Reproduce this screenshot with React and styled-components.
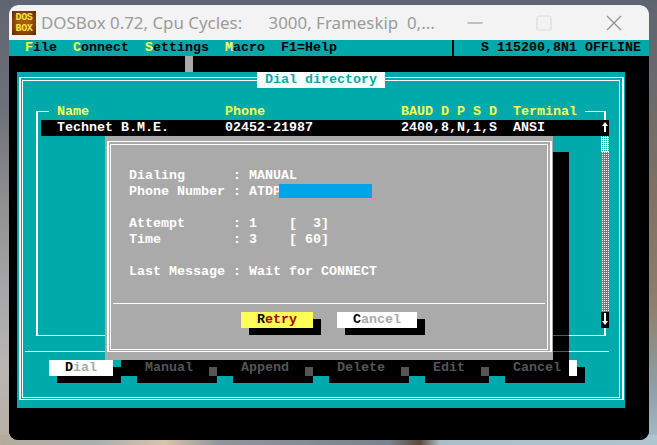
import React from "react"
import styled, { createGlobalStyle } from "styled-components"

const TEAL = "#00aaaa"
const GRAY = "#aaaaaa"
const DIM = "#555555"
const YELLOW = "#ffff55"

const GlobalStyle = createGlobalStyle`
  html, body {
    margin: 0;
    padding: 0;
    background: #5f6673;
  }
`

const Desktop = styled.div`
  width: 657px;
  height: 445px;
  box-sizing: border-box;
  padding: 5px 8px 5px 9px;
  overflow: hidden;
  background:
    linear-gradient(90deg, #b5aa9c 0, #aab0ae 100px, #d9c3ab 165px, #8f959b 220px, #78838f 390px, #5d4a38 420px, #a8bfca 440px, #aec4ce 657px) 0 100% / 100% 10px no-repeat,
    linear-gradient(180deg, #5f6570 0, #6d7078 110px, #8f8f8f 200px, #a9a9ab 300px, #b8b6b4 370px, #b9ad9f 445px) 0 0 / 14px 100% no-repeat,
    linear-gradient(180deg, #5f6570 0, #6c6a6c 90px, #7d7264 200px, #8d7d6a 300px, #8fa0a6 390px, #a8bec8 445px) 100% 0 / 14px 100% no-repeat,
    #5f6673;
`

const Window = styled.div`
  width: 640px;
  height: 435px;
  border-radius: 9px;
  overflow: hidden;
  background: #000;
`

const TitleBar = styled.div`
  height: 35px;
  display: flex;
  align-items: center;
  background: #f3f3f3;
`

const AppIcon = styled.div`
  width: 24px;
  height: 24px;
  margin: 0 5px 0 3px;
  background: radial-gradient(circle, #a85a10 30%, #5a2a05 100%);
  color: #ffe040;
  font: bold 10px/11px "Liberation Mono", monospace;
  letter-spacing: -0.4px;
  display: flex;
  flex-direction: column;
  align-items: center;
  justify-content: center;
`

const TitleText = styled.div`
  flex: 1;
  font: 16.9px "Noto Sans", "Open Sans", sans-serif;
  color: #9b9b9b;
  white-space: pre;
`

const WindowButton = styled.svg`
  width: 16px;
  height: 16px;
  margin-right: ${(p) => p.$gap}px;
  fill: none;
  stroke: ${(p) => p.$ink};
  stroke-width: 1.2;
`

const Screen = styled.div`
  display: grid;
  grid-template-columns: repeat(80, 8px);
  grid-template-rows: repeat(25, 16px);
  background: #000;
  color: #fff;
  font: bold 13.33px/16px "Liberation Mono", monospace;
  white-space: pre;
`

const MenuBar = styled.div`
  grid-column: 1 / -1;
  grid-row: 1;
  background: ${TEAL};
  color: #000;
`

const Hot = styled.span`
  color: ${(p) => p.$ink || YELLOW};
`

const MenuDivider = styled.div`
  grid-column: 56;
  grid-row: 1;
  width: 2px;
  margin-left: 3px;
  background: #000;
`

const StatusText = styled.div`
  grid-column: 60 / 81;
  grid-row: 1;
  color: #000;
`

const GrayTick = styled.div`
  grid-column: 23;
  grid-row: 2;
  background: ${GRAY};
`

const Panel = styled.div`
  grid-column: ${(p) => p.$col};
  grid-row: ${(p) => p.$row};
  background: ${(p) => p.$bg};
  display: flex;
`

const DoubleFrame = styled.div`
  flex: 1;
  display: flex;
  margin: 5px 1px 8px 2px;
  padding: 2px 2px 1px 1px;
  border: solid #fff;
  border-width: 1px 2px;
`

const FrameInner = styled.div`
  flex: 1;
  border: 1px solid #fff;
`

const PanelTitle = styled.div`
  grid-column: 32 / 48;
  grid-row: 3;
  background: #fff;
  color: ${TEAL};
`

const ListFrame = styled.div`
  grid-column: 4 / 76;
  grid-row: 5 / 20;
  margin: 7px 3px 8px 3px;
  border: solid #fff;
  border-width: 1px 2px;
`

const ListHeader = styled.div`
  grid-column: 6 / 73;
  grid-row: 5;
  background: ${TEAL};
  color: ${YELLOW};
`

const ListRow = styled.div`
  grid-column: 5 / 76;
  grid-row: 6;
  background: #000;
`

const ArrowCell = styled.svg`
  grid-column: 75;
  grid-row: ${(p) => p.$row};
  width: 8px;
  height: 16px;
  background: #000;
  fill: #fff;
`

const ScrollTrack = styled.div`
  grid-column: 75;
  grid-row: ${(p) => p.$row};
  background: repeating-conic-gradient(${(p) => (p.$thumb ? `${TEAL} 0 25%, #fff 0 100%` : `#fff 0 25%, ${TEAL} 0 100%`)}) 0 0 / 2px 2px;
`

const Rule = styled.div`
  grid-column: ${(p) => p.$col};
  grid-row: ${(p) => p.$row};
  height: 1px;
  margin-top: 7px;
  background: ${(p) => p.$ink || "#fff"};
`

const Shadow = styled.div`
  grid-column: ${(p) => p.$col};
  grid-row: ${(p) => p.$row};
  background: #000;
`

const DialogText = styled.div`
  grid-column: 16 / 60;
  grid-row: 9 / 16;
  color: #fff;
`

const PhoneField = styled.div`
  grid-column: 34 / 46;
  grid-row: 10;
  width: 93px;
  height: 14px;
  margin-left: 6px;
  background: #00a2e8;
`

const ButtonWrap = styled.div`
  grid-column: ${(p) => p.$col + 1} / span ${(p) => p.$w + 1};
  grid-row: ${(p) => p.$row + 1} / span 2;
  display: grid;
  grid-template-columns: 8px ${(p) => (p.$w - 1) * 8}px 8px;
  grid-template-rows: 7px 9px 7px 9px;
`

const ButtonFace = styled.div`
  grid-column: 1 / 3;
  grid-row: 1 / 3;
  background: ${(p) => p.$bg};
  color: ${(p) => p.$ink};
`

const ButtonSide = styled.div`
  grid-column: 3;
  grid-row: 2;
  background: ${(p) => p.$ink || "#000"};
`

const ButtonDrop = styled.div`
  grid-column: 2 / 4;
  grid-row: 3;
  background: #000;
`

const ButtonTail = styled.div`
  grid-column: 71;
  grid-row: 21;
  background: #fff;
`

const PushButton = ({ col, row, w, bg, ink, hot, label, side }) => (
  <ButtonWrap $col={col} $row={row} $w={w}>
    <ButtonFace $bg={bg} $ink={ink}>
      {"  "}
      <Hot $ink={hot}>{label[0]}</Hot>
      {label.slice(1)}
    </ButtonFace>
    <ButtonSide $ink={side} />
    <ButtonDrop />
  </ButtonWrap>
)

const barButtons = [
  { col: 15, w: 10, label: "Manual" },
  { col: 27, w: 10, label: "Append" },
  { col: 39, w: 10, label: "Delete" },
  { col: 51, w: 8, label: "Edit" },
]

const App = () => (
  <Desktop>
    <GlobalStyle />
    <Window>
      <TitleBar>
        <AppIcon>
          <span>DOS</span>
          <span>BOX</span>
        </AppIcon>
        <TitleText>{"DOSBox 0.72, Cpu Cycles:      3000, Frameskip  0,..."}</TitleText>
        <WindowButton viewBox="0 0 16 16" $ink="#8e8e8e" $gap={53}>
          <path d="M0.5 8h15" />
        </WindowButton>
        <WindowButton viewBox="0 0 16 16" $ink="#dddddd" $gap={54}>
          <rect x="1" y="1" width="14" height="14" rx="2" />
        </WindowButton>
        <WindowButton viewBox="0 0 16 16" $ink="#8e8e8e" $gap={27}>
          <path d="M1 1l14 14M15 1L1 15" />
        </WindowButton>
      </TitleBar>

      <Screen>
        <MenuBar>
          {"  "}<Hot>F</Hot>{"ile  "}<Hot>C</Hot>{"onnect  "}<Hot>S</Hot>{"ettings  "}<Hot>M</Hot>{"acro  F1=Help"}
        </MenuBar>
        <MenuDivider />
        <StatusText>S 115200,8N1 OFFLINE</StatusText>
        <GrayTick />

        <Panel $col="2 / 78" $row="3 / 24" $bg={TEAL}>
          <DoubleFrame>
            <FrameInner />
          </DoubleFrame>
        </Panel>
        <PanelTitle> Dial directory </PanelTitle>

        <ListFrame />
        <ListHeader>{" Name                 Phone                 BAUD D P S D  Terminal "}</ListHeader>
        <ListRow>{"  Technet B.M.E.       02452-21987           2400,8,N,1,S  ANSI"}</ListRow>
        <ArrowCell $row={6} viewBox="0 0 8 16">
          <path d="M3 12V6H1l3-4 3 4H5v6z" />
        </ArrowCell>
        <ScrollTrack $row="7" $thumb />
        <ScrollTrack $row="8 / 18" />
        <ArrowCell $row={18} viewBox="0 0 8 16">
          <path d="M3 1v8H1l3 4 3-4H5V1z" />
        </ArrowCell>
        <Rule $col="3 / 76" $row={20} />

        <PushButton col={5} row={20} w={8} bg="#fff" ink={GRAY} hot="#000" label="Dial" />

        <Shadow $col="69 / 71" $row="8 / 22" />
        <Shadow $col="15 / 69" $row="21" />
        <Rule $col="69 / 71" $row={19} $ink={DIM} />
        <Rule $col="69 / 71" $row={20} $ink={DIM} />

        <Panel $col="13 / 69" $row="7 / 21" $bg={GRAY}>
          <DoubleFrame>
            <FrameInner />
          </DoubleFrame>
        </Panel>
        <DialogText>
          {"Dialing      : MANUAL\nPhone Number : ATDP\n\nAttempt      : 1    [  3]\nTime         : 3    [ 60]\n\nLast Message : Wait for CONNECT"}
        </DialogText>
        <PhoneField />
        <Rule $col="14 / 68" $row={17} />
        <PushButton col={29} row={17} w={9} bg={YELLOW} ink="#aa0000" hot="#000" label="Retry" />
        <PushButton col={41} row={17} w={10} bg="#fff" ink={GRAY} hot="#000" label="Cancel" />

        {barButtons.map((b) => (
          <PushButton key={b.label} col={b.col} row={20} w={b.w} bg="transparent" ink={DIM} hot={DIM} label={b.label} side={DIM} />
        ))}
        <PushButton col={61} row={20} w={10} bg="transparent" ink={DIM} hot={DIM} label="Cancel" />
        <ButtonTail />
      </Screen>
    </Window>
  </Desktop>
)

export default App
